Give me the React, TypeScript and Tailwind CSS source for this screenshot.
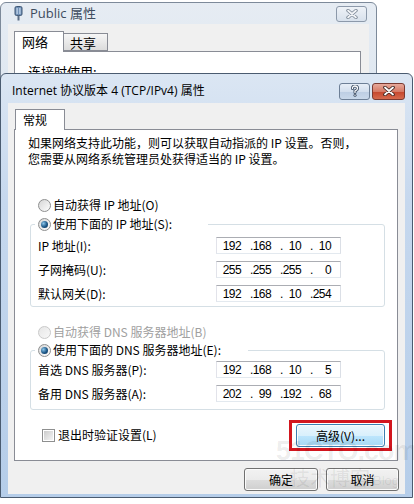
import React from "react";

// Windows 7 style TCP/IPv4 properties dialog stacked over its parent dialog

function Radio({ checked = false, disabled = false }: { checked?: boolean; disabled?: boolean }) {
  return (
    <span
      className={`w-[13px] h-[13px] shrink-0 rounded-full border flex items-center justify-center ${
        disabled
          ? "border-[#c9c9c9] bg-[linear-gradient(135deg,#e6e6e6,#f8f8f8)]"
          : "border-[#8e8f8f] bg-[linear-gradient(135deg,#d6d6d6,#fdfdfd)]"
      }`}
    >
      {checked && (
        <span className="w-[7px] h-[7px] rounded-full bg-[radial-gradient(circle_at_35%_35%,#8cc6ea,#1b5686_55%,#0b2f52)]" />
      )}
    </span>
  );
}

function Checkbox() {
  return (
    <span className="w-[13px] h-[13px] shrink-0 border border-[#8e8f8f] bg-white flex items-center justify-center">
      <span className="w-[9px] h-[9px] bg-[linear-gradient(135deg,#cbcbcb,#f4f4f4)]" />
    </span>
  );
}

function IpField({ parts }: { parts: string[] }) {
  return (
    <div className="w-[125px] h-[17px] border border-[#abadb3] border-l-[#e2e3ea] border-r-[#dbdfe6] border-b-[#e3e9ef] bg-white flex items-center text-[12px] leading-none tracking-[-0.6px] text-black font-['Liberation_Sans',sans-serif]">
      <span className="w-[24px] text-right">{parts[0]}</span>
      {parts.slice(1).map((p, i) => (
        <span key={i} className="w-[30px] flex justify-between">
          <span className="pl-[9px]">.</span>
          <span>{p}</span>
        </span>
      ))}
    </div>
  );
}

function Row({ label, parts }: { label: string; parts: string[] }) {
  return (
    <div className="flex items-center pl-[3px] h-[17px]">
      <span className="w-[178px] text-[12px] leading-none">{label}</span>
      <IpField parts={parts} />
    </div>
  );
}

function WinButton({ children, focus = false, className = "" }: { children: React.ReactNode; focus?: boolean; className?: string }) {
  return (
    <div
      className={`h-[23px] rounded-[3px] border flex items-center justify-center text-[12px] text-black shadow-[inset_0_0_0_1px_#fbfbfb] ${
        focus
          ? "border-[#3c7fb1] bg-[linear-gradient(#eaf6fd_0%,#d9f0fc_50%,#bee6fd_50%,#a7d9f5_100%)]"
          : "border-[#707070] bg-[linear-gradient(#f2f2f2_0%,#ebebeb_50%,#dddddd_50%,#cfcfcf_100%)]"
      } ${className}`}
    >
      {children}
    </div>
  );
}

function CloseGlyph() {
  return (
    <svg width="12" height="10" viewBox="0 0 12 10">
      <path d="M2 1.5 L10 8.5 M10 1.5 L2 8.5" stroke="#3b2420" strokeWidth="3.6" strokeLinecap="round" />
      <path d="M2 1.5 L10 8.5 M10 1.5 L2 8.5" stroke="#ffffff" strokeWidth="1.8" strokeLinecap="round" />
    </svg>
  );
}

function HelpGlyph() {
  return (
    <svg width="10" height="12" viewBox="0 0 10 12">
      <path d="M2.5 3.5 Q2.5 1 5 1 Q7.5 1 7.5 3.3 Q7.5 5 5 6 L5 7.5" fill="none" stroke="#3c4d63" strokeWidth="3" strokeLinecap="round" />
      <path d="M2.5 3.5 Q2.5 1 5 1 Q7.5 1 7.5 3.3 Q7.5 5 5 6 L5 7.5" fill="none" stroke="#ffffff" strokeWidth="1.3" strokeLinecap="round" />
      <circle cx="5" cy="10.2" r="1.5" fill="#3c4d63" />
      <circle cx="5" cy="10.2" r="0.7" fill="#ffffff" />
    </svg>
  );
}

function BackWindow() {
  return (
    <div className="absolute left-0 top-[2px] w-[377px] h-[110px] rounded-t-[6px] border border-[#7d8a9a] bg-[linear-gradient(#e6ecf3,#dde6f0)] flex flex-col">
      <div className="h-[27px] flex items-center pl-[13px] pr-[9px]">
        <svg width="9" height="15" viewBox="0 0 9 15">
          <rect x="1" y="0.5" width="7" height="9" rx="1.5" fill="#6f8fb5" stroke="#3e5674" />
          <rect x="2.5" y="2" width="1.2" height="6" fill="#c9dbef" />
          <rect x="5.3" y="2" width="1.2" height="6" fill="#c9dbef" />
          <rect x="3.5" y="9.5" width="2" height="5" fill="#5d6f86" />
        </svg>
        <span className="ml-[7px] text-[13px] text-[#3e4c5e] font-['Segoe_UI','Open_Sans','Noto_Sans_CJK_SC',sans-serif]">Public 属性</span>
        <div className="ml-auto w-[31px] h-[16px] rounded-[3px] border border-[#8c99aa] bg-[linear-gradient(#eef2f7,#d8e1ec)] flex items-center justify-center">
          <svg width="12" height="10" viewBox="0 0 12 10">
            <path d="M2 1.5 L10 8.5 M10 1.5 L2 8.5" stroke="#7b8796" strokeWidth="3.4" strokeLinecap="round" />
            <path d="M2 1.5 L10 8.5 M10 1.5 L2 8.5" stroke="#f3f5f8" strokeWidth="1.7" strokeLinecap="round" />
          </svg>
        </div>
      </div>
      <div className="mx-[7px] flex-1 bg-[#f0f0f0] pt-[7px] pl-[6px]">
        <div className="flex items-end">
          <div className="relative z-10 -mb-px w-[50px] h-[21px] bg-white border border-b-0 border-[#898c95] pl-[7px] text-[13px] leading-[20px]">网络</div>
          <div className="w-[44px] h-[18px] border border-l-0 border-[#898c95] bg-[linear-gradient(#f6f6f6,#dcdcdc)] pl-[6px] text-[13px] leading-[17px]">共享</div>
        </div>
        <div className="w-[347px] h-[60px] border border-[#898c95] bg-white pl-[13px] pt-[10px] text-[13px]">连接时使用:</div>
      </div>
    </div>
  );
}

function FrontWindow() {
  return (
    <div className="absolute left-0 top-[73px] w-[413px] h-[425px] rounded-t-[6px] border border-[#4a5b70] bg-[linear-gradient(#dbe6f3,#c6d8ee_30%,#b5cde9)] flex flex-col">
      <div className="h-[29px] flex items-center pt-[5px] pl-[11px] pr-[7px]">
        <span className="text-[12px] text-black font-['Segoe_UI','Open_Sans','Noto_Sans_CJK_SC',sans-serif]">Internet 协议版本 4 (TCP/IPv4) 属性</span>
        <div className="ml-auto flex gap-[2px]">
          <div className="w-[31px] h-[17px] rounded-[3px] border border-[#6d7f96] bg-[linear-gradient(#e7eef7_0%,#d3dfee_50%,#bccde3_50%,#c9d8ea_100%)] flex items-center justify-center">
            <HelpGlyph />
          </div>
          <div className="w-[33px] h-[17px] rounded-[3px] border border-[#7a3a32] bg-[linear-gradient(#e7a99b_0%,#d67a66_50%,#c4452c_50%,#d66a4e_100%)] flex items-center justify-center">
            <CloseGlyph />
          </div>
        </div>
      </div>

      <div className="mx-[7px] h-[391px] bg-[#f0f0f0] pt-[6px] pl-[6px] font-['Noto_Sans_CJK_SC',sans-serif] text-black">
        <div className="relative z-10 -mb-px ml-px w-[50px] h-[21px] bg-white border border-b-0 border-[#898c95] pl-[7px] text-[12px] leading-[20px]">常规</div>

        <div className="w-[384px] h-[332px] border border-[#898c95] bg-white flex flex-col">
          <div className="pt-[5px] pl-[13px] text-[12px] leading-[16px]">
            <div>如果网络支持此功能，则可以获取自动指派的 IP 设置。否则，</div>
            <div>您需要从网络系统管理员处获得适当的 IP 设置。</div>
          </div>

          <div className="mt-[30px] ml-[23px] h-[16px] flex items-center gap-[2px] text-[12px] leading-none">
            <Radio />
            <span>自动获得 IP 地址(O)</span>
          </div>

          <fieldset className="mt-[3px] ml-[15px] w-[355px] border border-[#d5dfe5] rounded-[3px] pl-[4px] pb-[4px]">
            <legend className="w-[173px] h-[16px] pl-[3px] flex items-center gap-[2px] text-[12px] leading-none">
              <Radio checked />
              <span>使用下面的 IP 地址(S):</span>
            </legend>
            <div className="mt-[5px] flex flex-col gap-[7px]">
              <Row label="IP 地址(I):" parts={["192", "168", "10", "10"]} />
              <Row label="子网掩码(U):" parts={["255", "255", "255", "0"]} />
              <Row label="默认网关(D):" parts={["192", "168", "10", "254"]} />
            </div>
          </fieldset>

          <div className="mt-[17px] ml-[23px] h-[16px] flex items-center gap-[2px] text-[12px] leading-none text-[#a0a0a0]">
            <Radio disabled />
            <span>自动获得 DNS 服务器地址(B)</span>
          </div>

          <fieldset className="mt-[2px] ml-[15px] w-[355px] border border-[#d5dfe5] rounded-[3px] pl-[4px] pb-[7px]">
            <legend className="w-[213px] h-[16px] pl-[3px] flex items-center gap-[2px] text-[12px] leading-none">
              <Radio checked />
              <span>使用下面的 DNS 服务器地址(E):</span>
            </legend>
            <div className="mt-[3px] flex flex-col gap-[7px]">
              <Row label="首选 DNS 服务器(P):" parts={["192", "168", "10", "5"]} />
              <Row label="备用 DNS 服务器(A):" parts={["202", "99", "192", "68"]} />
            </div>
          </fieldset>

          <div className="mt-[10px] ml-[15px] w-[362px] flex items-start justify-between">
            <div className="mt-[7px] pl-[12px] h-[16px] flex items-center gap-[3px] text-[12px] leading-none">
              <Checkbox />
              <span>退出时验证设置(L)</span>
            </div>
            <div className="w-[103px] h-[31px] border-[3px] border-[#d2161e] pl-[4px] pt-[1px]">
              <WinButton focus className="w-[89px]">高级(V)...</WinButton>
            </div>
          </div>
        </div>

        <div className="mt-[7px] pr-[6px] flex justify-end gap-[8px]">
          <WinButton className="w-[74px]">确定</WinButton>
          <WinButton className="w-[73px]">取消</WinButton>
        </div>
      </div>
    </div>
  );
}

export default function App() {
  return (
    <div className="relative w-[414px] h-[504px] bg-white overflow-hidden font-['Noto_Sans_CJK_SC',sans-serif]">
      <BackWindow />
      <FrontWindow />
      {/* faint site watermark */}
      <div className="absolute left-[276px] top-[436px] pointer-events-none text-black/[0.08] font-['Liberation_Sans',sans-serif]">
        <div className="text-[27px] font-bold leading-[30px] tracking-[-1px]">51CTO.com</div>
        <div className="flex items-end gap-[3px] pl-[14px] font-['Noto_Sans_CJK_SC',sans-serif]">
          <span className="text-[20px] leading-[24px]">技术博客</span>
          <span className="text-[13px] leading-[18px] font-['Liberation_Sans',sans-serif]">Blog</span>
        </div>
      </div>
    </div>
  );
}
